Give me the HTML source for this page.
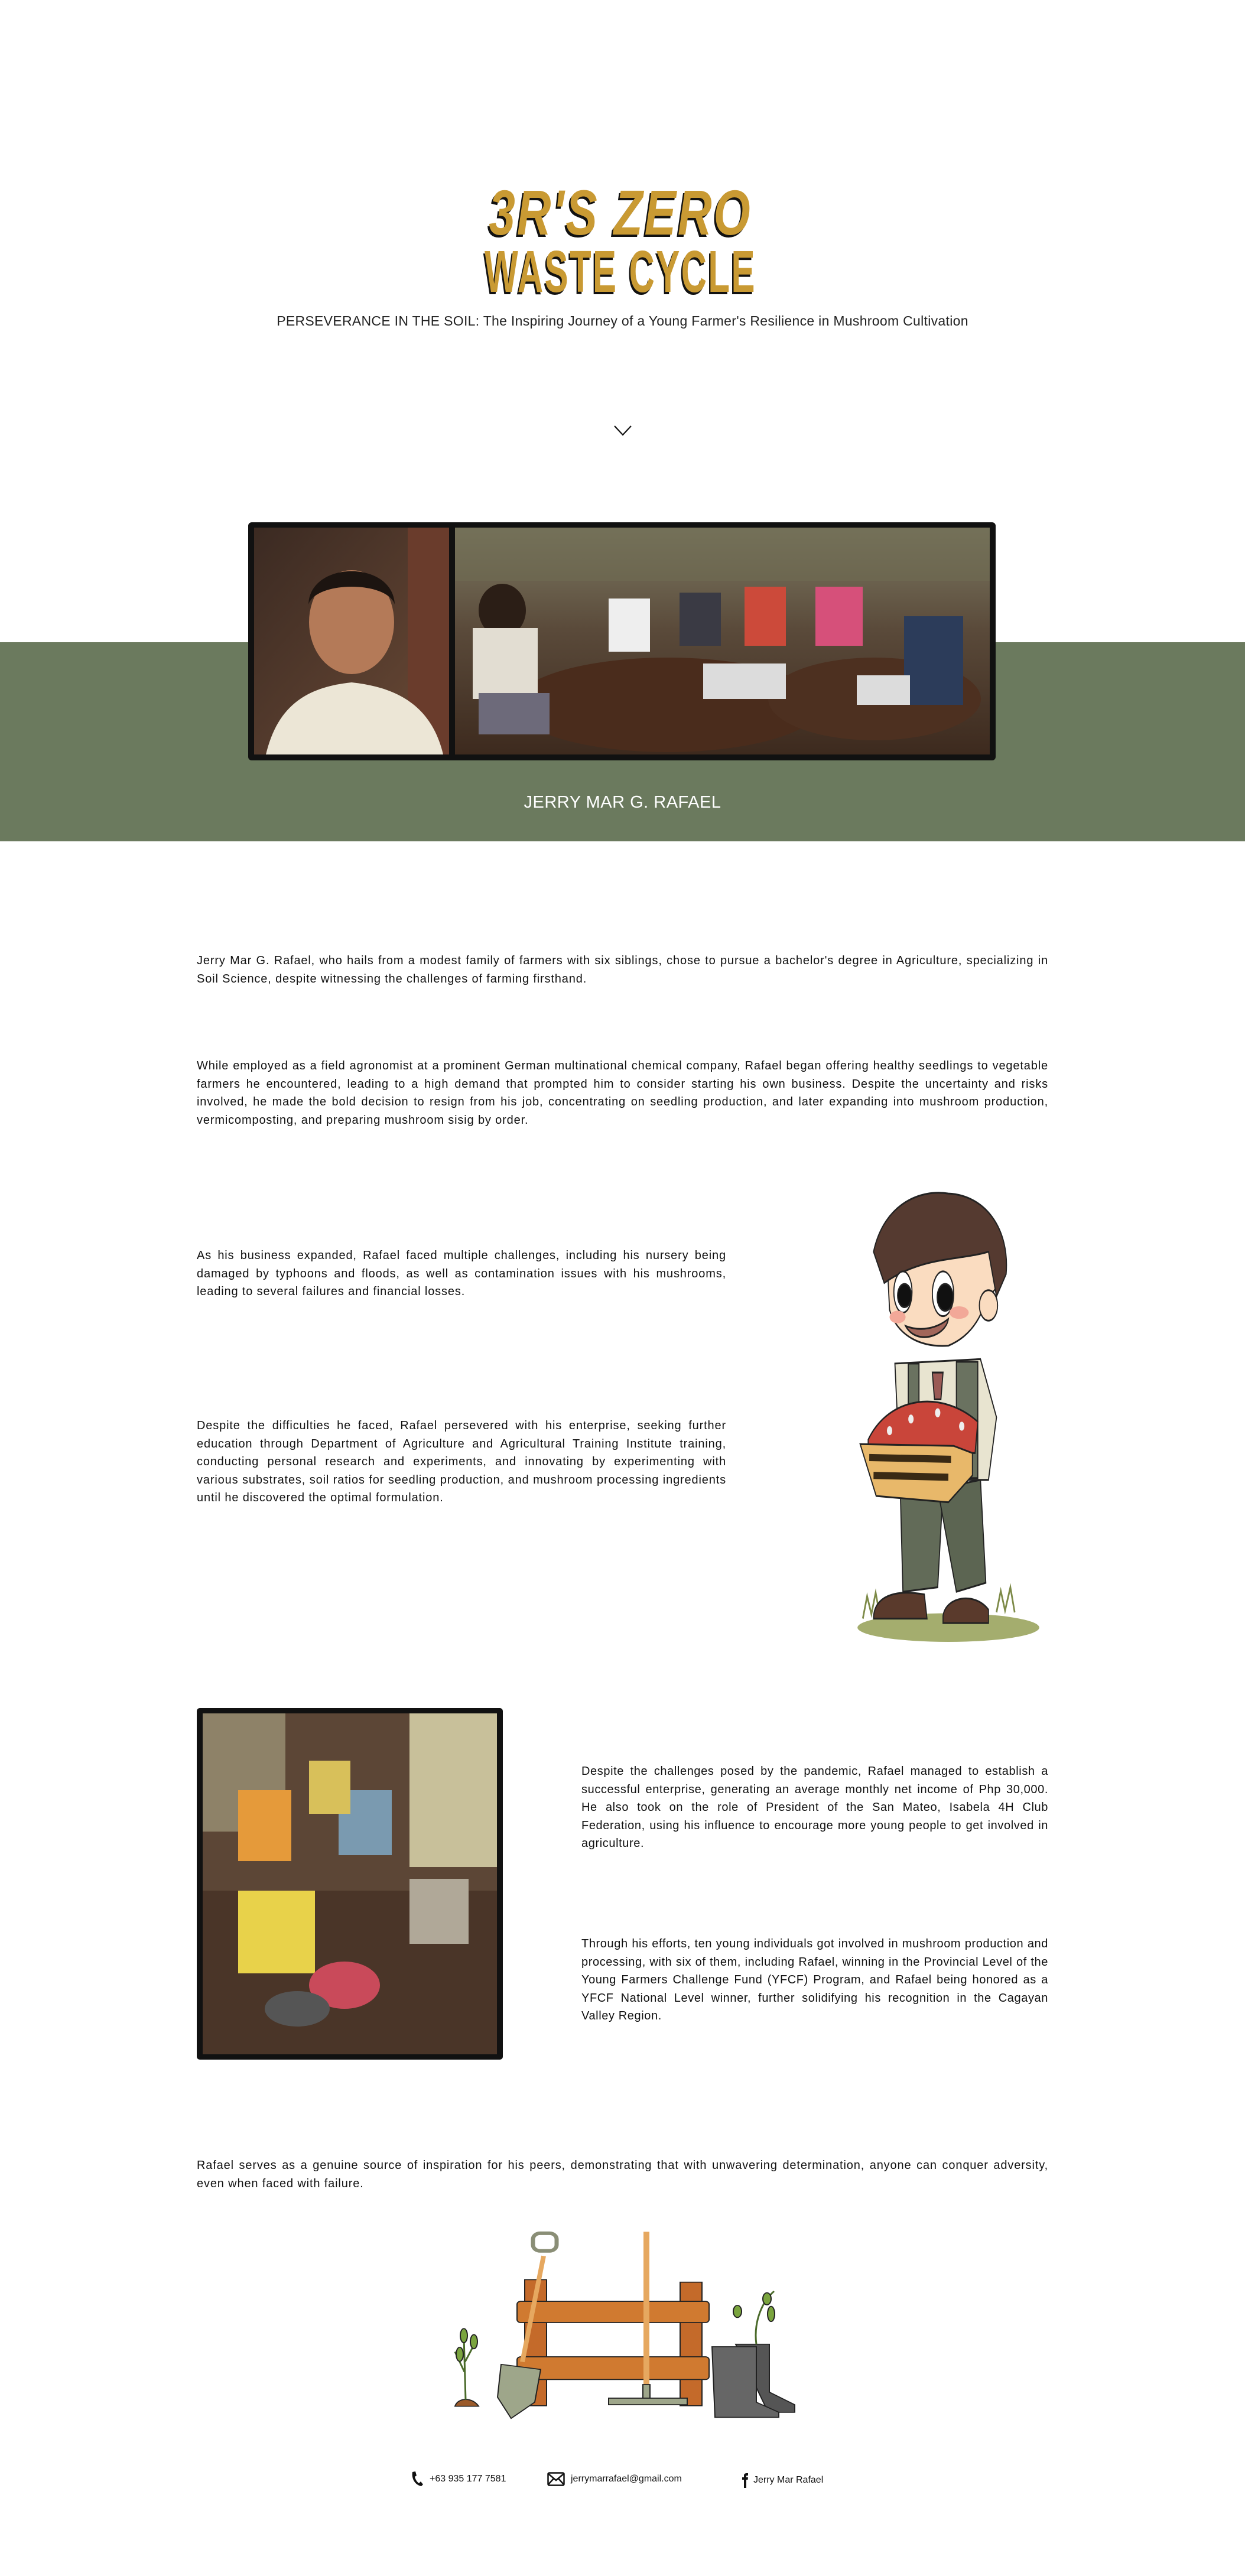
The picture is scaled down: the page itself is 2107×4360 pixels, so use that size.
<!DOCTYPE html>
<html><head><meta charset="utf-8"><style>
*{margin:0;padding:0;box-sizing:border-box}
html,body{width:2107px;height:4360px;background:#fff;overflow:hidden}
body{position:relative;font-family:"Liberation Sans",sans-serif;color:#111}
.abs{position:absolute}
p.t{position:absolute;font-size:20px;line-height:30.6px;text-align:justify;letter-spacing:0.85px}
.title{font-family:"Liberation Sans",sans-serif;font-weight:bold;color:#c99a33;text-shadow:-4px 4px 0 #111;transform-origin:center;text-align:center;letter-spacing:4px}
</style></head><body>

<div class="abs title" style="left:650px;top:312px;width:800px;font-size:108px;line-height:96px;font-style:italic;transform:scaleX(.74)">3R'S ZERO</div>
<div class="abs title" style="left:650px;top:410px;width:800px;font-size:100px;line-height:100px;transform:scaleX(.6)">WASTE CYCLE</div>
<div class="abs" style="left:0;top:530px;width:2107px;text-align:center;font-size:23px;color:#222;letter-spacing:.3px">PERSEVERANCE IN THE SOIL: The Inspiring Journey of a Young Farmer's Resilience in Mushroom Cultivation</div>
<svg class="abs" style="left:1038px;top:718px" width="32" height="22" viewBox="0 0 32 22"><path d="M2 3 L16 18 L30 3" fill="none" stroke="#111" stroke-width="2.2"/></svg>

<div class="abs" style="left:0;top:1087px;width:2107px;height:337px;background:#6b7a5e"></div>
<div class="abs" style="left:0;top:1342px;width:2107px;text-align:center;font-size:29px;color:#fff;letter-spacing:.5px">JERRY MAR G. RAFAEL</div>

<div class="abs" style="left:420px;top:884px;width:1265px;height:403px;background:#111;border-radius:6px"></div>
<svg class="abs" style="left:430px;top:893px" width="1245" height="384" viewBox="0 0 1245 384">
<defs><linearGradient id="g1" x1="0" y1="0" x2="1" y2="1"><stop offset="0" stop-color="#3b2a22"/><stop offset="1" stop-color="#6b4a36"/></linearGradient>
<linearGradient id="g2" x1="0" y1="0" x2="0" y2="1"><stop offset="0" stop-color="#7d7a63"/><stop offset=".45" stop-color="#5a4a3a"/><stop offset="1" stop-color="#3d2a1e"/></linearGradient></defs>
<rect width="330" height="384" fill="url(#g1)"/>
<rect x="260" y="0" width="70" height="384" fill="#6a3c2c"/>
<path d="M20 384 C40 300 90 270 165 262 C240 270 300 300 320 384Z" fill="#ece6d6"/>
<ellipse cx="165" cy="160" rx="72" ry="88" fill="#b47a58"/>
<path d="M92 130 C95 55 235 55 238 130 C225 90 105 90 92 130Z" fill="#1c1410"/>
<rect x="340" y="0" width="905" height="384" fill="url(#g2)"/>
<rect x="340" y="0" width="905" height="90" fill="#6e6a52" opacity=".6"/>
<ellipse cx="700" cy="300" rx="260" ry="80" fill="#4a2c1c"/>
<ellipse cx="1050" cy="290" rx="180" ry="70" fill="#4d3020"/>
<ellipse cx="420" cy="140" rx="40" ry="45" fill="#2b1e16"/>
<rect x="370" y="170" width="110" height="120" fill="#e2ddd2"/>
<rect x="380" y="280" width="120" height="70" fill="#6d6a7a"/>
<rect x="600" y="120" width="70" height="90" fill="#eee"/>
<rect x="720" y="110" width="70" height="90" fill="#3a3a44"/>
<rect x="830" y="100" width="70" height="100" fill="#cc4a3a"/>
<rect x="950" y="100" width="80" height="100" fill="#d6507a"/>
<rect x="1100" y="150" width="100" height="150" fill="#2c3c5a"/>
<rect x="760" y="230" width="140" height="60" fill="#dcdcdc"/>
<rect x="1020" y="250" width="90" height="50" fill="#dcdcdc"/>
</svg>

<p class="t" style="left:333px;top:1611px;width:1441px">Jerry Mar G. Rafael, who hails from a modest family of farmers with six siblings, chose to pursue a bachelor's degree in Agriculture, specializing in Soil Science, despite witnessing the challenges of farming firsthand.</p>
<p class="t" style="left:333px;top:1789px;width:1441px">While employed as a field agronomist at a prominent German multinational chemical company, Rafael began offering healthy seedlings to vegetable farmers he encountered, leading to a high demand that prompted him to consider starting his own business. Despite the uncertainty and risks involved, he made the bold decision to resign from his job, concentrating on seedling production, and later expanding into mushroom production, vermicomposting, and preparing mushroom sisig by order.</p>
<p class="t" style="left:333px;top:2110px;width:896px">As his business expanded, Rafael faced multiple challenges, including his nursery being damaged by typhoons and floods, as well as contamination issues with his mushrooms, leading to several failures and financial losses.</p>
<p class="t" style="left:333px;top:2398px;width:896px">Despite the difficulties he faced, Rafael persevered with his enterprise, seeking further education through Department of Agriculture and Agricultural Training Institute training, conducting personal research and experiments, and innovating by experimenting with various substrates, soil ratios for seedling production, and mushroom processing ingredients until he discovered the optimal formulation.</p>

<svg class="abs" style="left:1415px;top:2005px" width="380" height="780" viewBox="0 0 420 515" preserveAspectRatio="none" stroke="#222" stroke-width="2">
<ellipse cx="210" cy="495" rx="170" ry="16" fill="#a4ad6e" stroke="none"/>
<path d="M50 485 l8-25 8 20 8-24 8 26 M300 478 l8-24 8 22 10-26 8 28" fill="none" stroke="#7d8a48" stroke-width="3"/>
<path d="M120 340 L200 340 L190 450 L125 455Z" fill="#626b58"/>
<path d="M190 340 L270 330 L280 445 L225 455Z" fill="#5c6552"/>
<path d="M70 485 C70 460 110 452 165 458 L170 485Z" fill="#5a3a2c"/>
<path d="M200 482 C205 460 260 455 285 475 L285 490 L200 490Z" fill="#5a3a2c"/>
<path d="M110 200 L270 195 L300 260 L285 330 L120 330Z" fill="#e8e4d0"/>
<rect x="135" y="200" width="20" height="100" fill="#6a7260"/>
<rect x="225" y="198" width="40" height="130" fill="#6a7260"/>
<path d="M180 210 L200 210 L196 240 L184 240Z" fill="#9a5a55"/>
<path d="M60 285 C100 235 200 230 265 265 L260 300 L60 300Z" fill="#c9453a"/>
<circle cx="100" cy="275" r="5" fill="#eee" stroke="none"/><circle cx="140" cy="262" r="5" fill="#eee" stroke="none"/><circle cx="190" cy="255" r="5" fill="#eee" stroke="none"/><circle cx="235" cy="270" r="5" fill="#eee" stroke="none"/>
<path d="M45 290 L220 292 L255 300 L255 325 L210 355 L75 348Z" fill="#e8b86a"/>
<path d="M62 305 L215 307 M70 325 L210 327" stroke="#3a2a14" stroke-width="8"/>
<path d="M95 80 C105 45 150 15 210 20 C275 25 318 70 300 115 L280 130 C270 150 250 170 210 180 C160 182 115 170 100 140Z" fill="#fadcc0"/>
<path d="M70 75 C90 20 160 5 210 10 C280 12 325 50 318 100 L300 125 L285 75 C230 85 160 80 90 110Z" fill="#553a30"/>
<ellipse cx="125" cy="120" rx="17" ry="23" fill="#fff"/><circle cx="128" cy="124" r="13" fill="#111"/>
<ellipse cx="200" cy="122" rx="20" ry="25" fill="#fff"/><circle cx="204" cy="126" r="15" fill="#111"/>
<ellipse cx="115" cy="148" rx="15" ry="7" fill="#f2a898" stroke="none"/><ellipse cx="230" cy="143" rx="18" ry="7" fill="#f2a898" stroke="none"/>
<path d="M130 158 C160 165 190 160 210 150 C205 170 150 180 130 158Z" fill="#a2665a"/>
<circle cx="285" cy="135" r="17" fill="#fadcc0"/>
</svg>

<div class="abs" style="left:333px;top:2891px;width:518px;height:595px;background:#111;border-radius:5px"></div>
<svg class="abs" style="left:343px;top:2900px" width="498" height="577" viewBox="0 0 498 577">
<rect width="498" height="577" fill="#5c4636"/>
<rect x="0" y="0" width="140" height="200" fill="#8e8268"/>
<rect x="350" y="0" width="148" height="260" fill="#c8c09a"/>
<rect x="0" y="300" width="498" height="277" fill="#4a3528"/>
<rect x="60" y="130" width="90" height="120" fill="#e59a3a"/>
<rect x="230" y="130" width="90" height="110" fill="#7a9ab0"/>
<rect x="180" y="80" width="70" height="90" fill="#d8c05a"/>
<rect x="60" y="300" width="130" height="140" fill="#e8d24a"/>
<rect x="350" y="280" width="100" height="110" fill="#b0a898"/>
<ellipse cx="240" cy="460" rx="60" ry="40" fill="#c94a5a"/>
<ellipse cx="160" cy="500" rx="55" ry="30" fill="#555"/>
</svg>

<p class="t" style="left:984px;top:2983px;width:790px;letter-spacing:0.6px">Despite the challenges posed by the pandemic, Rafael managed to establish a successful enterprise, generating an average monthly net income of Php 30,000. He also took on the role of President of the San Mateo, Isabela 4H Club Federation, using his influence to encourage more young people to get involved in agriculture.</p>
<p class="t" style="left:984px;top:3275px;width:790px;letter-spacing:0.6px">Through his efforts, ten young individuals got involved in mushroom production and processing, with six of them, including Rafael, winning in the Provincial Level of the Young Farmers Challenge Fund (YFCF) Program, and Rafael being honored as a YFCF National Level winner, further solidifying his recognition in the Cagayan Valley Region.</p>
<p class="t" style="left:333px;top:3650px;width:1441px">Rafael serves as a genuine source of inspiration for his peers, demonstrating that with unwavering determination, anyone can conquer adversity, even when faced with failure.</p>

<svg class="abs" style="left:740px;top:3750px" width="630" height="350" viewBox="740 3750 630 410" preserveAspectRatio="none" stroke="#222" stroke-width="2">
<path d="M770 4128 C775 4110 800 4110 810 4128Z" fill="#9a5a2a"/>
<path d="M788 4115 L785 3990 M786 4060 L770 4020 M787 4040 L805 4000" fill="none" stroke="#4a6a2a" stroke-width="3"/>
<ellipse cx="778" cy="4025" rx="6" ry="14" fill="#7aa43e"/><ellipse cx="802" cy="4000" rx="6" ry="14" fill="#7aa43e"/><ellipse cx="785" cy="3988" rx="6" ry="14" fill="#7aa43e"/>
<rect x="888" y="3877" width="37" height="250" fill="#c46a2a"/>
<rect x="1151" y="3882" width="37" height="245" fill="#c46a2a"/>
<rect x="875" y="3920" width="325" height="42" rx="6" fill="#d07a30"/>
<rect x="875" y="4030" width="325" height="45" rx="6" fill="#d07a30"/>
<path d="M920 3830 L884 4040" stroke="#e6a860" stroke-width="8"/>
<rect x="902" y="3785" width="40" height="35" rx="12" fill="none" stroke="#8a8e76" stroke-width="7"/>
<path d="M848 4045 L915 4055 L905 4120 L865 4152 L842 4110Z" fill="#9ea68a"/>
<path d="M1094 3782 L1094 4085" stroke="#e6a860" stroke-width="10"/>
<path d="M1030 4112 L1163 4112 L1163 4125 L1030 4125Z M1088 4085 L1100 4085 L1100 4112 L1088 4112Z" fill="#9ea68a"/>
<path d="M1245 4005 L1302 4005 L1302 4100 L1345 4125 L1345 4140 L1300 4140Z" fill="#555"/>
<path d="M1205 4010 L1280 4010 L1280 4120 L1318 4140 L1318 4150 L1210 4150Z" fill="#666"/>
<path d="M1280 4005 C1275 3960 1290 3920 1310 3900" fill="none" stroke="#4a6a2a" stroke-width="3"/>
<ellipse cx="1305" cy="3945" rx="6" ry="15" fill="#7aa43e"/><ellipse cx="1248" cy="3940" rx="7" ry="12" fill="#7aa43e"/><ellipse cx="1298" cy="3915" rx="7" ry="12" fill="#7aa43e"/>
</svg>

<div class="abs" style="left:695px;top:4182px;font-size:16px;display:flex;align-items:center;height:28px">
<svg width="22" height="28" viewBox="0 0 22 28"><path d="M3 2 L8 1 L10 8 L7 10 C8 15 11 19 14 21 L17 18 L21 23 L18 26 C8 24 1 14 3 2Z" fill="#111"/></svg>
<span style="margin-left:10px">+63 935 177 7581</span></div>
<div class="abs" style="left:926px;top:4182px;font-size:16px;display:flex;align-items:center;height:28px">
<svg width="30" height="24" viewBox="0 0 30 24"><rect x="1.5" y="1.5" width="27" height="21" rx="2" fill="none" stroke="#111" stroke-width="2.5"/><path d="M2 3 L15 14 L28 3 M2 21 L11 11 M28 21 L19 11" fill="none" stroke="#111" stroke-width="2.5"/></svg>
<span style="margin-left:10px">jerrymarrafael@gmail.com</span></div>
<div class="abs" style="left:1255px;top:4184px;font-size:16px;display:flex;align-items:center;height:28px">
<svg width="12" height="26" viewBox="0 0 12 26"><path d="M4 26 L4 12 L1 12 L1 8 L4 8 L4 5 C4 2 6 1 9 1 L11 1 L11 5 L9 5 C8 5 8 6 8 7 L8 8 L11 8 L10.5 12 L8 12 L8 26Z" fill="#111"/></svg>
<span style="margin-left:8px">Jerry Mar Rafael</span></div>

</body></html>
